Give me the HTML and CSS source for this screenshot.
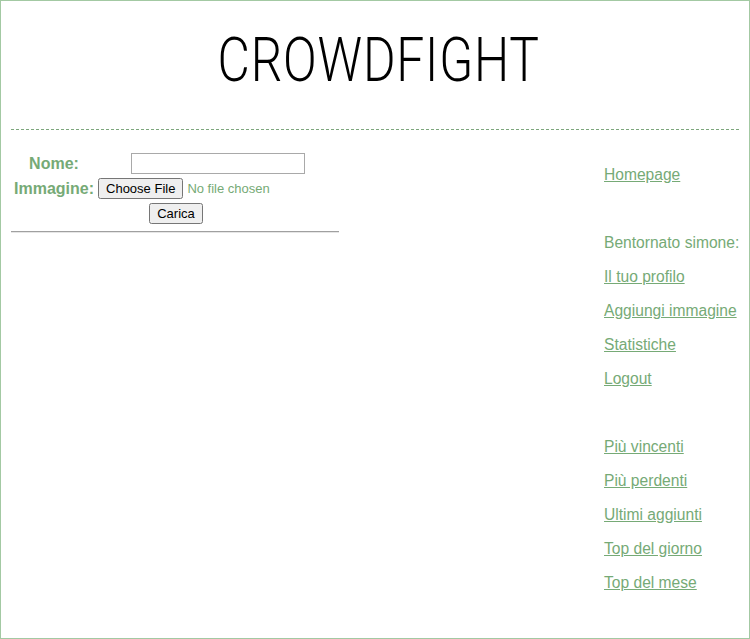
FILE: index.html
```html
<!DOCTYPE html>
<html lang="it">
<head>
<meta charset="utf-8">
<title>Crowdfight</title>
<link rel="stylesheet" href="styles.css">
</head>
<body>
<div class="page">
  <header class="header">
    <h1 class="title">CROWDFIGHT</h1>
  </header>
  <div class="content">
    <main class="main">
      <form class="upload">
        <table class="form-table">
          <tr>
            <td class="label">Nome:</td>
            <td class="field"><input class="text-input" type="text"></td>
          </tr>
          <tr>
            <td class="label">Immagine:</td>
            <td class="field"><input class="file-input" type="file"></td>
          </tr>
          <tr>
            <td colspan="2" class="submit-cell"><button class="btn" type="button">Carica</button></td>
          </tr>
        </table>
      </form>
      <hr class="rule">
    </main>
    <nav class="sidebar">
      <a href="#" class="nav-link">Homepage</a>
      <span class="nav-blank"></span>
      <span class="nav-text">Bentornato simone:</span>
      <a href="#" class="nav-link">Il tuo profilo</a>
      <a href="#" class="nav-link">Aggiungi immagine</a>
      <a href="#" class="nav-link">Statistiche</a>
      <a href="#" class="nav-link">Logout</a>
      <span class="nav-blank"></span>
      <a href="#" class="nav-link">Più vincenti</a>
      <a href="#" class="nav-link">Più perdenti</a>
      <a href="#" class="nav-link">Ultimi aggiunti</a>
      <a href="#" class="nav-link">Top del giorno</a>
      <a href="#" class="nav-link">Top del mese</a>
    </nav>
  </div>
</div>
</body>
</html>
```

FILE: styles.css
```css
html, body {
  margin: 0;
  padding: 0;
  background: #fff;
}
.page {
  box-sizing: border-box;
  height: 639px;
  border: 1px solid #a3c9a3;
  padding: 0 10px;
  font-family: "Liberation Sans", Arial, sans-serif;
  color: #76aa76;
}
.header {
  height: 128px;
  border-bottom: 1px dashed #7da77d;
  display: flex;
  justify-content: center;
  padding-left: 8px;
}
.title {
  margin: 22px 0 0 0;
  font-family: Roboto, sans-serif;
  font-weight: 300;
  font-size: 61px;
  line-height: 74px;
  color: #000;
  transform: scaleX(0.815);
  letter-spacing: 1px;
}
.content {
  display: flex;
}
.main {
  width: 328px;
  padding-top: 20px;
}
.form-table {
  width: 100%;
  border-spacing: 2px;
}
.form-table td {
  padding: 1px;
  text-align: center;
}
.label {
  font-weight: bold;
  font-size: 16px;
  color: #76aa76;
  white-space: nowrap;
}
.field {
  width: 240px;
}
.text-input {
  box-sizing: border-box;
  width: 174px;
  height: 21px;
  border: 1px solid #a9a9a9;
  padding: 1px 2px;
  margin: 0;
  font-family: "Liberation Sans", Arial, sans-serif;
  font-size: 13px;
}
.file-input {
  box-sizing: border-box;
  width: 240px;
  font-family: "Liberation Sans", Arial, sans-serif;
  font-size: 13px;
  color: #76aa76;
}
.submit-cell {
  padding: 0;
}
.btn {
  font-family: "Liberation Sans", Arial, sans-serif;
  font-size: 13px;
}
.rule {
  margin: 4px 0 0 0;
  border: 0;
  border-top: 1px solid #a0a0a0;
  border-bottom: 1px solid #e6e6e6;
}
.sidebar {
  margin-left: auto;
  width: 135px;
  padding-top: 28px;
  display: flex;
  flex-direction: column;
  font-family: "Liberation Sans", Arial, sans-serif;
  font-size: 15.6px;
}
.nav-link, .nav-text {
  display: block;
  height: 34px;
  line-height: 34px;
  color: #76aa76;
  white-space: nowrap;
}
.nav-blank {
  display: block;
  height: 34px;
}
```
